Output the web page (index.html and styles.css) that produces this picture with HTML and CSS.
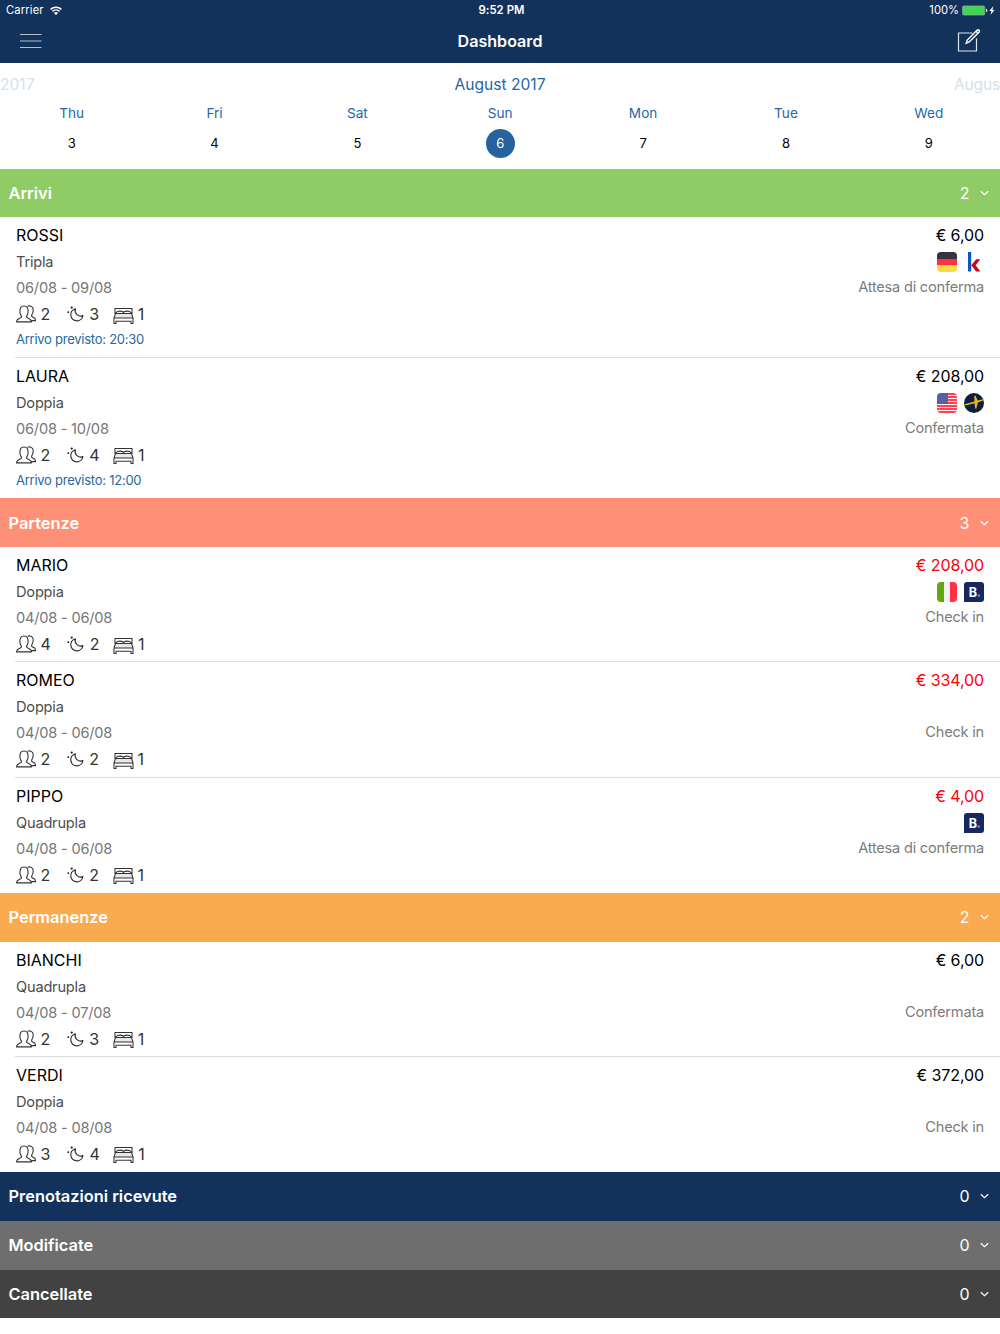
FILE: index.html
```html
<!DOCTYPE html>
<html lang="it">
<head>
<meta charset="utf-8">
<title>Dashboard</title>
<link rel="stylesheet" href="styles.css">
</head>
<body>
<svg class="sprite" aria-hidden="true">
  <symbol id="people" viewBox="0 0 20 18"><g fill="#fff" stroke="#333" stroke-width="1.100" stroke-linejoin="round"><path d="M11.500 1.300c2.600-1.100 5.700.2 5.700 3.400 0 2.300-.2 3.800-1.500 5.100v1.800l3.300 1.700.5 2.300h-6"/><path d="M.5 16.900c.2-2.400 1-2.900 2.700-3.500 1.500-.5 2.300-1 2.300-1.700 0-1-1.400-2-1.500-4C3.700 3.200 4.600 1 8 1s4.300 2.200 4 6.700c-.1 2-1.500 3-1.500 4 0 .7.800 1.200 2.300 1.700 1.700.6 2.500 1.100 2.700 3.500z"/></g></symbol>
  <symbol id="moon" viewBox="0 0 17 16"><path d="M8.400 2.800A6.100 6.100 0 1 0 15.900 9.600 5.600 5.600 0 0 1 8.400 2.800z" fill="none" stroke="#333" stroke-width="1.200" stroke-linejoin="round"/><circle cx="4.700" cy="1.600" r="1.150" fill="#222"/><circle cx="1.300" cy="6.200" r=".9" fill="#222"/><circle cx="4.500" cy="5.600" r=".6" fill="#222"/></symbol>
  <symbol id="bed" viewBox="0 0 21 17"><path d="M2.500 6h16l1.500 5H1z" fill="#e8e8e8"/><path d="M2 7V1.500h17V7M2.500 6.200l1.800-1.600q3-1 5.700.2l.5 1 .5-1q2.700-1.200 5.700-.2l1.800 1.600M2.500 6.500h16l1.500 4.300v5.700h-2v-2.200H3v2.200H1v-5.700zM1 11h19" fill="none" stroke="#333" stroke-width="1.050"/></symbol>
  <symbol id="chevron" viewBox="0 0 9 6"><path d="M.8 1.200l3.700 3.500 3.700-3.500" fill="none" stroke="#fff" stroke-width="1.200"/></symbol>
  <symbol id="booking" viewBox="0 0 20 20"><path d="M3 0h14a3 3 0 0 1 3 3v14a3 3 0 0 1-3 3H0V3a3 3 0 0 1 3-3z" fill="#172860"/><text x="4.700" y="14.600" class="booking-letter">B</text><circle cx="14.800" cy="13.600" r="1.300" fill="#2d9be8"/></symbol>
</svg>

<header class="top">
  <div class="status">
    <span class="carrier">Carrier
      <svg width="12" height="9" viewBox="0 0 12 9"><g fill="none" stroke="#fff" stroke-width="1.500"><path d="M.6 3.400a7.700 7.700 0 0 1 10.800 0"/><path d="M2.500 5.400a5 5 0 0 1 7 0"/></g><path d="M6 8.900L4 7a2.900 2.900 0 0 1 4 0z" fill="#fff"/></svg>
    </span>
    <span class="clock">9:52 PM</span>
    <span class="battery">100%
      <svg width="33" height="11" viewBox="0 0 33 11"><rect x=".4" y=".9" width="22.400" height="9.200" rx="1.500" fill="#43d551" stroke="#8ba0b8" stroke-width=".7"/><path d="M24 3.800q1.300.3 1.300 1.700T24 7.200z" fill="#fff"/><path d="M31.200 1.200L27.300 6h2l-.6 3.700L32.500 4.900h-2z" fill="#fff"/></svg>
    </span>
  </div>
  <div class="nav">
    <svg width="22" height="15" viewBox="0 0 22 15"><path d="M0 .5h21.500M0 7h21.500M0 13.500h21.500" stroke="#b5c0ce" stroke-width="1.100"/></svg>
    <h1>Dashboard</h1>
    <svg width="24" height="24" viewBox="0 0 24 24"><g fill="none" stroke="#fff"><path d="M15.500 4h-14v18h18V9.500" stroke-width="1.200" stroke="#dce3eb"/><path d="M9.200 14.300l1.100-3.200L20.200 1.100q1.100-.6 1.800.1t.1 1.900l-9.900 9.900z" stroke-width="1.400"/><path d="M18.800 2l2.600 2.600" stroke-width="1.500"/></g></svg>
  </div>
</header>

<section class="calendar">
  <div class="months"><span>2017</span><strong>August 2017</strong><span>Augus</span></div>
  <div class="days">
    <div class="day">Thu<b>3</b></div>
    <div class="day">Fri<b>4</b></div>
    <div class="day">Sat<b>5</b></div>
    <div class="day today">Sun<b>6</b></div>
    <div class="day">Mon<b>7</b></div>
    <div class="day">Tue<b>8</b></div>
    <div class="day">Wed<b>9</b></div>
  </div>
</section>

<section>
  <h2 class="bar green">Arrivi <span>2</span><svg><use href="#chevron"/></svg></h2>
  <article class="booking tall">
    <div class="guest">
      <div class="name">ROSSI</div><div class="room">Tripla</div><div class="dates">06/08 - 09/08</div>
      <div class="stats"><svg class="people"><use href="#people"/></svg><i>2</i><svg class="moon"><use href="#moon"/></svg><i>3</i><svg class="bed"><use href="#bed"/></svg><i>1</i></div>
      <div class="arrival">Arrivo previsto: 20:30</div>
    </div>
    <div class="summary">
      <div class="price">€ 6,00</div>
      <div class="badges">
        <span class="flag germany"></span>
        <svg viewBox="0 0 20 20"><path d="M4 0h3.200v19.500H4z" fill="#0759bd"/><path d="M12.200 7.300h4.200l-4.800 6 4.800 6.200h-4.200l-5-6.200z" fill="#d0021b"/></svg>
      </div>
      <div class="state">Attesa di conferma</div>
    </div>
  </article>
  <article class="booking tall">
    <div class="guest">
      <div class="name">LAURA</div><div class="room">Doppia</div><div class="dates">06/08 - 10/08</div>
      <div class="stats"><svg class="people"><use href="#people"/></svg><i>2</i><svg class="moon"><use href="#moon"/></svg><i>4</i><svg class="bed"><use href="#bed"/></svg><i>1</i></div>
      <div class="arrival">Arrivo previsto: 12:00</div>
    </div>
    <div class="summary">
      <div class="price">€ 208,00</div>
      <div class="badges">
        <span class="flag usa"></span>
        <svg viewBox="0 0 20 20"><circle cx="10" cy="10" r="10" fill="#0b203f"/><path d="M.7 11.200L10.500 8.500 10.300 2.800l1.200-.1 2.200 4.800 4.200-1.100 1.300.1-.4 1-5 1.900-1.400 6-1.100.3-.8-5.500-8 2-1.800-.1z" fill="#f3b51b"/></svg>
      </div>
      <div class="state">Confermata</div>
    </div>
  </article>
</section>

<section>
  <h2 class="bar coral">Partenze <span>3</span><svg><use href="#chevron"/></svg></h2>
  <article class="booking">
    <div class="guest">
      <div class="name">MARIO</div><div class="room">Doppia</div><div class="dates">04/08 - 06/08</div>
      <div class="stats"><svg class="people"><use href="#people"/></svg><i>4</i><svg class="moon"><use href="#moon"/></svg><i>2</i><svg class="bed"><use href="#bed"/></svg><i>1</i></div>
    </div>
    <div class="summary">
      <div class="price due">€ 208,00</div>
      <div class="badges"><span class="flag italy"></span><svg><use href="#booking"/></svg></div>
      <div class="state">Check in</div>
    </div>
  </article>
  <article class="booking">
    <div class="guest">
      <div class="name">ROMEO</div><div class="room">Doppia</div><div class="dates">04/08 - 06/08</div>
      <div class="stats"><svg class="people"><use href="#people"/></svg><i>2</i><svg class="moon"><use href="#moon"/></svg><i>2</i><svg class="bed"><use href="#bed"/></svg><i>1</i></div>
    </div>
    <div class="summary">
      <div class="price due">€ 334,00</div>
      <div class="badges"></div>
      <div class="state">Check in</div>
    </div>
  </article>
  <article class="booking">
    <div class="guest">
      <div class="name">PIPPO</div><div class="room">Quadrupla</div><div class="dates">04/08 - 06/08</div>
      <div class="stats"><svg class="people"><use href="#people"/></svg><i>2</i><svg class="moon"><use href="#moon"/></svg><i>2</i><svg class="bed"><use href="#bed"/></svg><i>1</i></div>
    </div>
    <div class="summary">
      <div class="price due">€ 4,00</div>
      <div class="badges"><svg><use href="#booking"/></svg></div>
      <div class="state">Attesa di conferma</div>
    </div>
  </article>
</section>

<section>
  <h2 class="bar orange">Permanenze <span>2</span><svg><use href="#chevron"/></svg></h2>
  <article class="booking">
    <div class="guest">
      <div class="name">BIANCHI</div><div class="room">Quadrupla</div><div class="dates">04/08 - 07/08</div>
      <div class="stats"><svg class="people"><use href="#people"/></svg><i>2</i><svg class="moon"><use href="#moon"/></svg><i>3</i><svg class="bed"><use href="#bed"/></svg><i>1</i></div>
    </div>
    <div class="summary">
      <div class="price">€ 6,00</div>
      <div class="badges"></div>
      <div class="state">Confermata</div>
    </div>
  </article>
  <article class="booking">
    <div class="guest">
      <div class="name">VERDI</div><div class="room">Doppia</div><div class="dates">04/08 - 08/08</div>
      <div class="stats"><svg class="people"><use href="#people"/></svg><i>3</i><svg class="moon"><use href="#moon"/></svg><i>4</i><svg class="bed"><use href="#bed"/></svg><i>1</i></div>
    </div>
    <div class="summary">
      <div class="price">€ 372,00</div>
      <div class="badges"></div>
      <div class="state">Check in</div>
    </div>
  </article>
</section>

<h2 class="bar navy">Prenotazioni ricevute <span>0</span><svg><use href="#chevron"/></svg></h2>
<h2 class="bar gray">Modificate <span>0</span><svg><use href="#chevron"/></svg></h2>
<h2 class="bar dark">Cancellate <span>0</span><svg><use href="#chevron"/></svg></h2>
</body>
</html>
```

FILE: styles.css
```css
* { box-sizing: border-box; }
body {
  margin: 0;
  background: #fff;
  color: #000;
  font-family: Inter, "Liberation Sans", sans-serif;
  font-size: 14.6px;
}
svg { display: block; flex: none; }
.sprite { display: none; }
h1, h2 { margin: 0; }

.top { height: 62.5px; background: #13325b; color: #fff; }
.status {
  display: grid;
  grid-template-columns: 1fr auto 1fr;
  align-items: center;
  height: 20px;
  padding: 0 5px 0 6px;
  font-size: 11.2px;
}
.status span { display: flex; align-items: center; }
.carrier { gap: 6px; letter-spacing: .15px; }
.clock { font-weight: 600; font-size: 11.3px; padding-left: 2px; letter-spacing: .1px; }
.battery { justify-content: flex-end; gap: 3px; }
.nav {
  display: flex;
  align-items: center;
  justify-content: space-between;
  height: 42px;
  padding: 0 19px 0 20px;
}
.nav h1 { padding-left: 1px; font-size: 16.1px; font-weight: 600; line-height: 42px; }

.calendar { height: 106px; padding-top: 11px; color: #2667a5; }
.months {
  display: grid;
  grid-template-columns: 1fr auto 1fr;
  height: 22px;
  line-height: 22px;
  font-size: 15.6px;
}
.months strong { font-weight: 400; }
.months span { color: #d3e1ed; }
.months span:last-child { text-align: right; letter-spacing: -.2px; }
.days { display: grid; grid-template-columns: repeat(7, 1fr); }
.day {
  display: flex;
  flex-direction: column;
  align-items: center;
  gap: 1px;
  padding: 3px 0 0 .5px;
  line-height: 29px;
  font-size: 13.6px;
}
.day b {
  width: 29px;
  height: 29px;
  border-radius: 50%;
  color: #000;
  font-size: 13px;
  font-weight: 400;
  text-align: center;
}
.today b { background: #24639f; color: #fff; }

.bar {
  display: flex;
  align-items: center;
  height: 48.8px;
  padding: 0 11px 0 8.500px;
  color: #fff;
  font-size: 16.400px;
  font-weight: 600;
}
.bar span { margin-left: auto; font-size: 16px; font-weight: 400; }
.bar svg { width: 9px; height: 6px; margin-left: 10.500px; }
.green { background: #90cc65; }
.coral { background: #ff9078; }
.orange { background: #faaa4f; }
.navy { background: #13325b; }
.gray { background: #6e6e6e; }
.dark { background: #424242; }

.booking {
  display: flex;
  justify-content: space-between;
  height: 115.2px;
  margin-left: 15px;
  padding: 5px 16px 0 1px;
}
.booking.tall { height: 140.6px; }
.booking:not(:last-child) {
  background: linear-gradient(#dcdcdc, #dcdcdc) left bottom / 100% 1px no-repeat;
  background-origin: border-box;
  margin-right: -16px;
  padding-right: 32px;
}
section { overflow: hidden; }
.name, .price { height: 27px; line-height: 26px; font-size: 16px; }
.price { letter-spacing: -.1px; }
.room { height: 26px; line-height: 27.500px; color: #4d4d4d; letter-spacing: -.2px; }
.dates { height: 25px; line-height: 26px; color: #777; letter-spacing: -.2px; }
.stats {
  display: flex;
  align-items: center;
  height: 28px;
  color: #333;
  font-size: 16px;
}
.stats i { font-style: normal; }
.people { width: 20px; height: 18px; margin-right: 4.500px; }
.moon { width: 17px; height: 16px; margin: 0 5.500px 0 16.500px; }
.bed { width: 21px; height: 17px; margin: 1.500px 4px 0 13.500px; }
.arrival { line-height: 22px; color: #2667a5; font-size: 13px; letter-spacing: -.25px; }
.summary { text-align: right; }
.price.due { color: #fb0007; }
.badges {
  display: flex;
  justify-content: flex-end;
  gap: 7.500px;
  height: 25px;
  padding-top: 3px;
}
.badges svg, .flag { width: 20px; height: 20px; }
.flag { border-radius: 4px; }
.germany { background: linear-gradient(#36323f 33%, #ff3042 33% 67%, #ffda44 67%); }
.italy { background: linear-gradient(90deg, #65a510 33%, #f2f2f2 33% 67%, #ff3048 67%); }
.usa {
  background:
    linear-gradient(#5a5fa0, #5a5fa0) 0 0 / 11px 11px no-repeat,
    repeating-linear-gradient(#ff4155 0 1.540px, #f8f3f5 1.540px 3.080px);
}
.state { line-height: 26.500px; color: #7c7c7c; letter-spacing: -.22px; }
.booking-letter { fill: #fff; font: 700 12.500px Inter, sans-serif; }
```
